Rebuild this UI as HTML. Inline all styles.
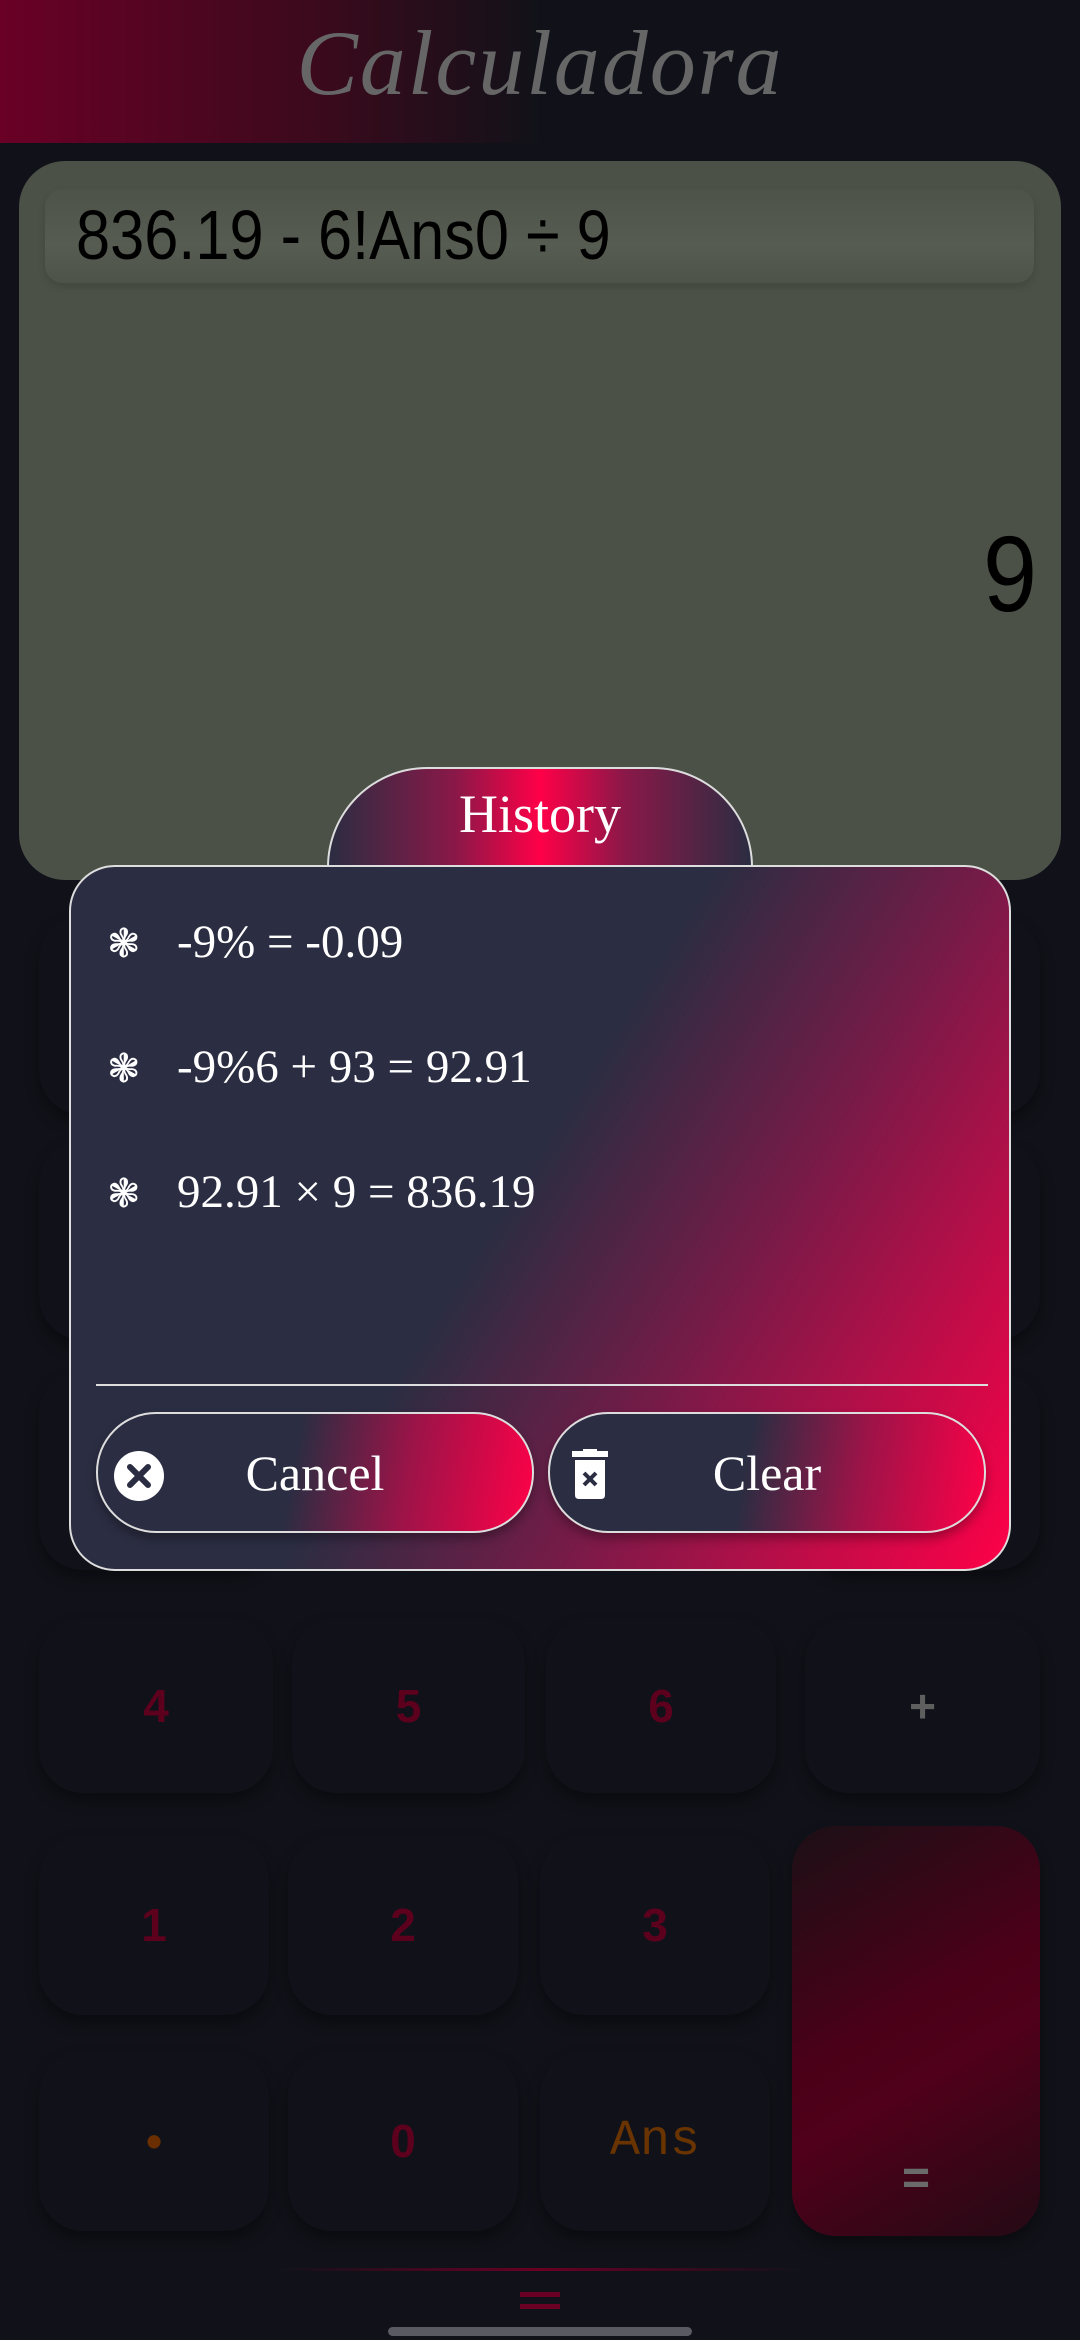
<!DOCTYPE html>
<html><head><meta charset="utf-8"><style>
*{margin:0;padding:0;box-sizing:border-box}
body{width:1080px;height:2340px;background:#111219;position:relative;overflow:hidden;font-family:"Liberation Sans",sans-serif}
.hdr{position:absolute;left:0;top:0;width:1080px;height:143px;background:linear-gradient(90deg,#6a0026 0%,#3a0a1c 30%,#111219 50%);}
.title{position:absolute;left:0;width:1080px;top:10px;text-align:center;font-family:"URW Chancery L","Liberation Serif",cursive;font-style:italic;font-size:92px;color:#666;letter-spacing:2px}
.disp{position:absolute;left:19px;top:161px;width:1042px;height:719px;background:#4b5147;border-radius:46px}
.inp{position:absolute;left:26px;top:28px;width:989px;height:94px;border-radius:18px;background:linear-gradient(#4d5348,#565c51 60%,#4d5348);box-shadow:0 4px 8px rgba(0,0,0,.12)}
.inp span{position:absolute;left:31px;top:6px;font-size:70px;color:#000;transform:scaleX(.876);transform-origin:left;white-space:nowrap}
.res{position:absolute;right:24px;top:350px;font-size:108px;color:#000;transform:scaleX(.9);transform-origin:right}
.key{position:absolute;background:#111219;border-radius:44px;box-shadow:0 8px 14px rgba(0,0,0,.4);color:#5c001e;font-weight:bold;font-size:46px;display:flex;align-items:center;justify-content:center;font-family:"Liberation Sans Narrow","Liberation Sans",sans-serif}
.tab{position:absolute;left:327px;top:767px;width:426px;height:100px;border:2px solid #ddd;border-bottom:none;border-radius:100px 100px 0 0;background:linear-gradient(90deg,#2b2d42 0%,#8a1848 30%,#ff0048 50%,#8a1848 70%,#2b2d42 100%);color:#fff;font-family:"Liberation Serif",serif;font-size:54px;text-align:center;padding-top:14px}
.dlg{position:absolute;left:69px;top:865px;width:942px;height:706px;border:2px solid #ddd;border-radius:46px;background:linear-gradient(122deg,#2b2d42 0%,#2b2d42 47%,#7a1a48 68%,#ff0048 100%)}
.it{position:absolute;left:36px;color:#fff;font-family:"Liberation Serif",serif;font-size:47px}
.it b{display:inline-block;width:70px;font-weight:normal;font-size:40px}
.div{position:absolute;left:25px;top:517px;width:892px;height:2px;background:#ddd}
.btn{position:absolute;top:545px;width:438px;height:121px;border:2px solid #ddd;border-radius:60px;box-shadow:0 6px 10px rgba(0,0,0,.3);color:#fff;font-family:"Liberation Serif",serif;font-size:50px;display:flex;align-items:center;justify-content:center}
</style></head><body>
<div class="hdr"></div>
<div class="title">Calculadora</div>
<div class="disp"><div class="inp"><span>836.19 - 6!Ans0 ÷ 9</span></div><div class="res">9</div></div>

<div class="key" style="left:39px;top:915px;width:234px;height:200px"></div>
<div class="key" style="left:805px;top:915px;width:235px;height:200px"></div>
<div class="key" style="left:39px;top:1140px;width:234px;height:200px"></div>
<div class="key" style="left:805px;top:1140px;width:235px;height:200px"></div>
<div class="key" style="left:39px;top:1370px;width:234px;height:200px"></div>
<div class="key" style="left:805px;top:1370px;width:235px;height:200px"></div>

<div class="key" style="left:39px;top:1618px;width:234px;height:175px">4</div>
<div class="key" style="left:292px;top:1618px;width:233px;height:175px">5</div>
<div class="key" style="left:546px;top:1618px;width:230px;height:175px">6</div>
<div class="key" style="left:805px;top:1618px;width:235px;height:175px;color:#5e5e5e">+</div>
<div class="key" style="left:39px;top:1835px;width:230px;height:180px">1</div>
<div class="key" style="left:288px;top:1835px;width:230px;height:180px">2</div>
<div class="key" style="left:540px;top:1835px;width:230px;height:180px">3</div>
<div class="key" style="left:39px;top:2051px;width:230px;height:180px;color:#6a2e00">•</div>
<div class="key" style="left:288px;top:2051px;width:230px;height:180px">0</div>
<div class="key" style="left:540px;top:2051px;width:230px;height:180px;color:#6a3400;font-family:'Courier New','Liberation Mono',monospace;font-weight:normal;font-size:50px">Ans</div>
<div class="key" style="left:792px;top:1826px;width:248px;height:410px;background:linear-gradient(150deg,#1c1016 0%,#4a0018 45%,#50001a 60%,#240a14 100%);color:#6a6a6a;align-items:flex-end;padding-bottom:30px;font-size:48px">=</div>

<div style="position:absolute;left:280px;top:2268px;width:520px;height:3px;background:linear-gradient(90deg,transparent,#6a0024,transparent)"></div>
<div style="position:absolute;left:520px;top:2292px;width:40px;height:5px;background:#6a0024"></div>
<div style="position:absolute;left:520px;top:2304px;width:40px;height:5px;background:#6a0024"></div>
<div style="position:absolute;left:388px;top:2327px;width:304px;height:9px;border-radius:5px;background:#5a5a62"></div>

<div class="tab">History</div>
<div class="dlg">
<div class="it" style="top:48px"><b>❃</b>-9% = -0.09</div>
<div class="it" style="top:173px"><b>❃</b>-9%6 + 93 = 92.91</div>
<div class="it" style="top:298px"><b>❃</b>92.91 × 9 = 836.19</div>
<div class="div"></div>
<div class="btn" style="left:25px;background:linear-gradient(100deg,#2b2d42 45%,#9a1448 70%,#ff0048 100%)">
<svg style="position:absolute;left:16px;top:37px" width="50" height="50" viewBox="0 0 50 50"><circle cx="25" cy="25" r="25" fill="#fff"/><path d="M16 16L34 34M34 16L16 34" stroke="#2b2d42" stroke-width="6" stroke-linecap="round"/></svg>
Cancel</div>
<div class="btn" style="left:477px;background:linear-gradient(100deg,#2b2d42 45%,#9a1448 70%,#ff0048 100%)">
<svg style="position:absolute;left:22px;top:35px" width="36" height="50" viewBox="0 0 36 50"><rect x="0" y="2" width="36" height="6" fill="#fff"/><rect x="11" y="0" width="14" height="4" fill="#fff"/><path d="M3 11H33V46Q33 50 29 50H7Q3 50 3 46Z" fill="#fff"/><path d="M12 24L24 36M24 24L12 36" stroke="#2b2d42" stroke-width="4"/></svg>
Clear</div>
</div>
</body></html>
